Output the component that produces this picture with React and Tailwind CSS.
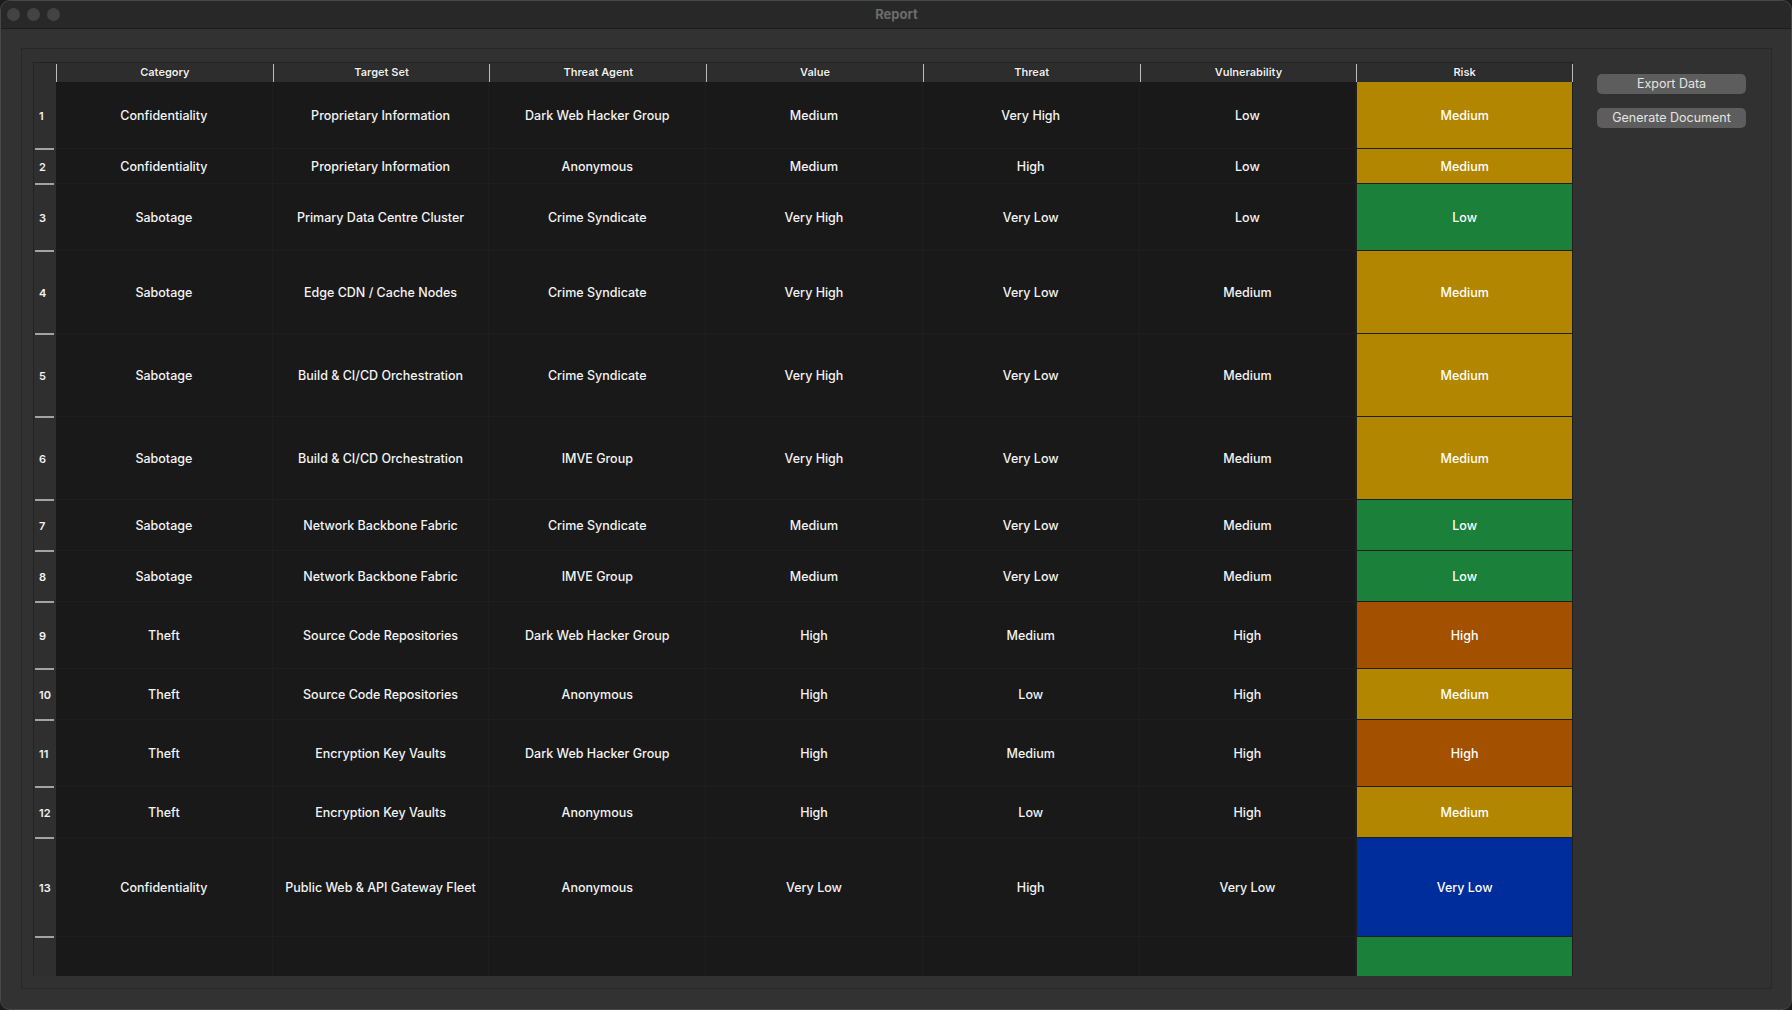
import React from "react";

const COLS = ["Category", "Target Set", "Threat Agent", "Value", "Threat", "Vulnerability", "Risk"];

const ROWS = [
  { h: 67, d: ["Confidentiality", "Proprietary Information", "Dark Web Hacker Group", "Medium", "Very High", "Low"], r: "Medium" },
  { h: 35, d: ["Confidentiality", "Proprietary Information", "Anonymous", "Medium", "High", "Low"], r: "Medium" },
  { h: 67, d: ["Sabotage", "Primary Data Centre Cluster", "Crime Syndicate", "Very High", "Very Low", "Low"], r: "Low" },
  { h: 83, d: ["Sabotage", "Edge CDN / Cache Nodes", "Crime Syndicate", "Very High", "Very Low", "Medium"], r: "Medium" },
  { h: 83, d: ["Sabotage", "Build & CI/CD Orchestration", "Crime Syndicate", "Very High", "Very Low", "Medium"], r: "Medium" },
  { h: 83, d: ["Sabotage", "Build & CI/CD Orchestration", "IMVE Group", "Very High", "Very Low", "Medium"], r: "Medium" },
  { h: 51, d: ["Sabotage", "Network Backbone Fabric", "Crime Syndicate", "Medium", "Very Low", "Medium"], r: "Low" },
  { h: 51, d: ["Sabotage", "Network Backbone Fabric", "IMVE Group", "Medium", "Very Low", "Medium"], r: "Low" },
  { h: 67, d: ["Theft", "Source Code Repositories", "Dark Web Hacker Group", "High", "Medium", "High"], r: "High" },
  { h: 51, d: ["Theft", "Source Code Repositories", "Anonymous", "High", "Low", "High"], r: "Medium" },
  { h: 67, d: ["Theft", "Encryption Key Vaults", "Dark Web Hacker Group", "High", "Medium", "High"], r: "High" },
  { h: 51, d: ["Theft", "Encryption Key Vaults", "Anonymous", "High", "Low", "High"], r: "Medium" },
  { h: 99, d: ["Confidentiality", "Public Web & API Gateway Fleet", "Anonymous", "Very Low", "High", "Very Low"], r: "Very Low" },
  { h: 99, d: ["", "", "", "", "", ""], r: "Low", blank: true },
];

const RISK_BG = {
  "Very Low": "bg-[#002d9c]",
  Low: "bg-[#1b8039]",
  Medium: "bg-[#b38600]",
  High: "bg-[#a35000]",
};

function Row({ row, idx }) {
  return (
    <div className="grid grid-cols-[22px_repeat(7,minmax(0,1fr))] shrink-0" style={{ height: row.h }}>
      <div className="relative flex items-center bg-[#2f2f2f] pl-[5px] pt-[1px] text-[11px] font-semibold text-[#f2f2f2]">
        {row.blank ? "" : idx + 1}
        <div className="absolute left-[1px] right-[2px] bottom-[-1px] h-[2px] bg-[#a3a3a3] z-10" />
      </div>
      {row.d.map((t, i) => (
        <div
          key={i}
          className="flex items-center justify-center pt-[2px] border-r border-b border-[#1e1e1e] text-[12.5px] font-medium text-[#f3f3f3]"
        >
          {t}
        </div>
      ))}
      <div
        className={`flex items-center justify-center pt-[2px] border-l border-r border-b border-[#1f1f1f] text-[12.5px] font-medium text-white ${RISK_BG[row.r]}`}
      >
        {row.blank ? "" : row.r}
      </div>
    </div>
  );
}

export default function App() {
  return (
    <div
      className="w-[1792px] h-[1010px] bg-[#1c1c1c] overflow-hidden"
      style={{ fontFamily: "Inter, 'Noto Sans', 'Liberation Sans', sans-serif" }}
    >
      <div className="w-full h-full rounded-[10px] border border-[#474747] overflow-hidden flex flex-col bg-[#323232]">
        {/* title bar */}
        <div className="relative h-[28px] shrink-0 bg-[#282828] border-b border-[#1d1d1d] flex items-center">
          <div className="flex items-center gap-[7px] pl-[6px]">
            <div className="w-[13px] h-[13px] rounded-full bg-[#434343]" />
            <div className="w-[13px] h-[13px] rounded-full bg-[#434343]" />
            <div className="w-[13px] h-[13px] rounded-full bg-[#434343]" />
          </div>
          <div className="flex-1 text-center text-[13px] font-bold text-[#6c6c6c] pr-[58px]">Report</div>
        </div>

        {/* content */}
        <div className="flex-1 min-h-0 pl-[20px] pt-[19px] pr-[19px] pb-[20px] flex">
          <div className="flex-1 border border-[#282828] bg-[#313131] pl-[11px] pt-[13px] pb-[12px] flex">
            {/* table */}
            <div className="w-[1540px] h-[914px] shrink-0 overflow-hidden border-l border-t border-[#232323] bg-[#191919] flex flex-col">
              <div className="grid grid-cols-[22px_repeat(7,minmax(0,1fr))] h-[19px] shrink-0 bg-[#2d2d2d]">
                <div className="bg-[#2f2f2f]" />
                {COLS.map((c, i) => (
                  <div key={c} className="flex items-center">
                    <div className="w-px h-[18px] bg-[#bcbcbc]" />
                    <div
                      className="flex-1 text-center text-[11px] font-semibold text-[#f0f0f0]"
                      style={{ textShadow: "0 0 1px #000" }}
                    >
                      {c}
                    </div>
                    {i === COLS.length - 1 && <div className="w-px h-[18px] bg-[#bcbcbc]" />}
                  </div>
                ))}
              </div>
              {ROWS.map((r, i) => (
                <Row key={i} row={r} idx={i} />
              ))}
            </div>

            {/* buttons */}
            <div className="ml-[24px] pt-[12px] flex flex-col gap-[14px]">
              <button className="w-[149px] h-[20px] rounded-[5px] bg-[#5d5d5d] text-[12.5px] leading-none text-[#e4e4e4]">
                Export Data
              </button>
              <button className="w-[149px] h-[20px] rounded-[5px] bg-[#5d5d5d] text-[12.5px] leading-none text-[#e4e4e4]">
                Generate Document
              </button>
            </div>
          </div>
        </div>
      </div>
    </div>
  );
}
